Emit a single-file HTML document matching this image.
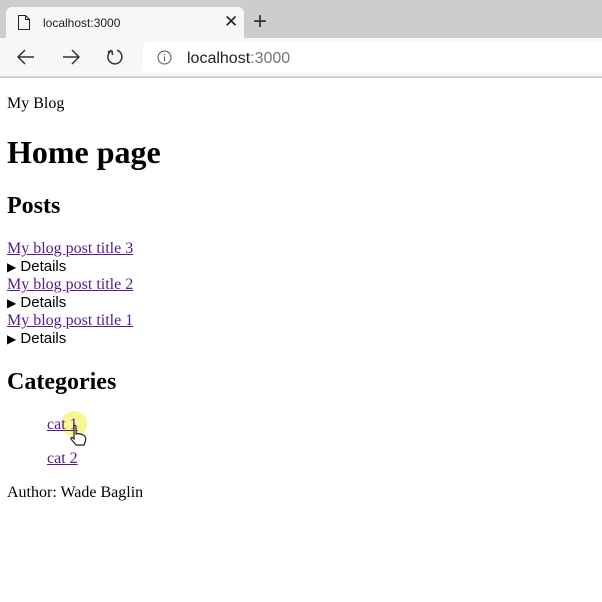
<!DOCTYPE html>
<html><head><style>
html,body{margin:0;padding:0;width:602px;height:602px;overflow:hidden;background:#fff}
.chrome{position:relative;height:78px;background:#cdcdcd;font-family:"Liberation Sans",sans-serif}
.tab{position:absolute;left:6px;top:7px;width:238px;height:32px;background:#f7f7f7;border-radius:6px 6px 0 0}
.tab .t{position:absolute;left:37px;top:9px;font-size:12px;color:#222}
.tab .x{position:absolute;left:218px;top:5px;font-size:17px;color:#222}
.plus{position:absolute;left:253px;top:8px;font-size:24px;color:#333;font-weight:300}
.bar{position:absolute;left:0;top:38px;width:602px;height:38px;background:#f7f7f7;border-bottom:1px solid #d8d8d8}
.addr{position:absolute;left:143px;top:4px;width:470px;height:30px;background:#fff;border-radius:4px}
.addr .u{position:absolute;left:44px;top:8px;font-size:16px;color:#222}
.addr .u span{color:#777}
.content{position:absolute;left:-1px;top:79px;width:602px;font-family:"Liberation Serif",serif;font-size:16px;color:#000}
p{margin:16px 8px;line-height:18px}
h1{margin:21px 8px;font-size:32px;line-height:37px}
h2{margin:20px 8px;font-size:24px;line-height:28px}
a{color:#551a8b}
.posts{margin:0 8px;line-height:18px}
.sum{font-family:"Liberation Sans",sans-serif;font-size:15px;line-height:18px}
.sum b{font-weight:normal;font-size:12px}
ul{list-style:none;margin:0;padding:0 0 0 48px}
li{margin:0 0 16px 0;line-height:18px}
</style></head><body>
<div class="chrome">
 <div class="tab">
  <svg style="position:absolute;left:12px;top:8px" width="12" height="15" viewBox="0 0 12 15"><path d="M0.5 0.5H7.5L11.5 4.5V14.5H0.5Z M7.5 0.5V4.5H11.5" fill="none" stroke="#222" stroke-width="1"/></svg>
  <div class="t">localhost:3000</div><div class="x">✕</div>
 </div>
 <div class="plus">+</div>
 <div class="bar">
  <svg style="position:absolute;left:17px;top:11px" width="18" height="16" viewBox="0 0 18 16"><path d="M17 8H2M8 1L1 8L8 15" fill="none" stroke="#333" stroke-width="1.5"/></svg>
  <svg style="position:absolute;left:62px;top:11px" width="18" height="16" viewBox="0 0 18 16"><path d="M1 8H16M10 1L17 8L10 15" fill="none" stroke="#333" stroke-width="1.5"/></svg>
  <svg style="position:absolute;left:106px;top:10px" width="18" height="18" viewBox="0 0 18 18"><path d="M6 2.5A7 7 0 1 0 11 2.2M6 2.5L6.5 7M6 2.5L1.8 4" fill="none" stroke="#333" stroke-width="1.5"/></svg>
  <div class="addr">
   <svg style="position:absolute;left:14px;top:8px" width="15" height="15" viewBox="0 0 15 15"><circle cx="7.5" cy="7.5" r="6.5" fill="none" stroke="#555"/><path d="M7.5 6.5V11M7.5 4V5" stroke="#555"/></svg>
   <div class="u">localhost<span>:3000</span></div>
  </div>
 </div>
</div>
<div class="content">
<p>My Blog</p>
<h1>Home page</h1>
<h2>Posts</h2>
<div class="posts">
<div><a href="#">My blog post title 3</a></div>
<div class="sum"><b>▶</b> Details</div>
<div><a href="#">My blog post title 2</a></div>
<div class="sum"><b>▶</b> Details</div>
<div><a href="#">My blog post title 1</a></div>
<div class="sum"><b>▶</b> Details</div>
</div>
<h2>Categories</h2>
<ul style="margin-top:20px">
<li style="position:relative"><span style="position:absolute;left:14px;top:-5px;width:26px;height:26px;border-radius:50%;background:rgba(245,240,80,0.6)"></span><a href="#" style="position:relative">cat 1</a>
<svg style="position:absolute;left:22px;top:8px" width="20" height="24" viewBox="0 0 20 24"><path d="M5 1.5C6 1 7 1.5 7 3V10L9 9.5L11 10L13 10.5L15 11.5C16.5 12.5 17 14 16.5 17L15 21H7L2 15C1.5 13.5 3 13 4 14L5 15V3C5 2.3 5 1.8 5 1.5Z" fill="#fff" stroke="#222" stroke-width="1.2"/></svg></li>
<li><a href="#">cat 2</a></li>
</ul>
<p style="margin-top:0">Author: Wade Baglin</p>
</div>
</body></html>
